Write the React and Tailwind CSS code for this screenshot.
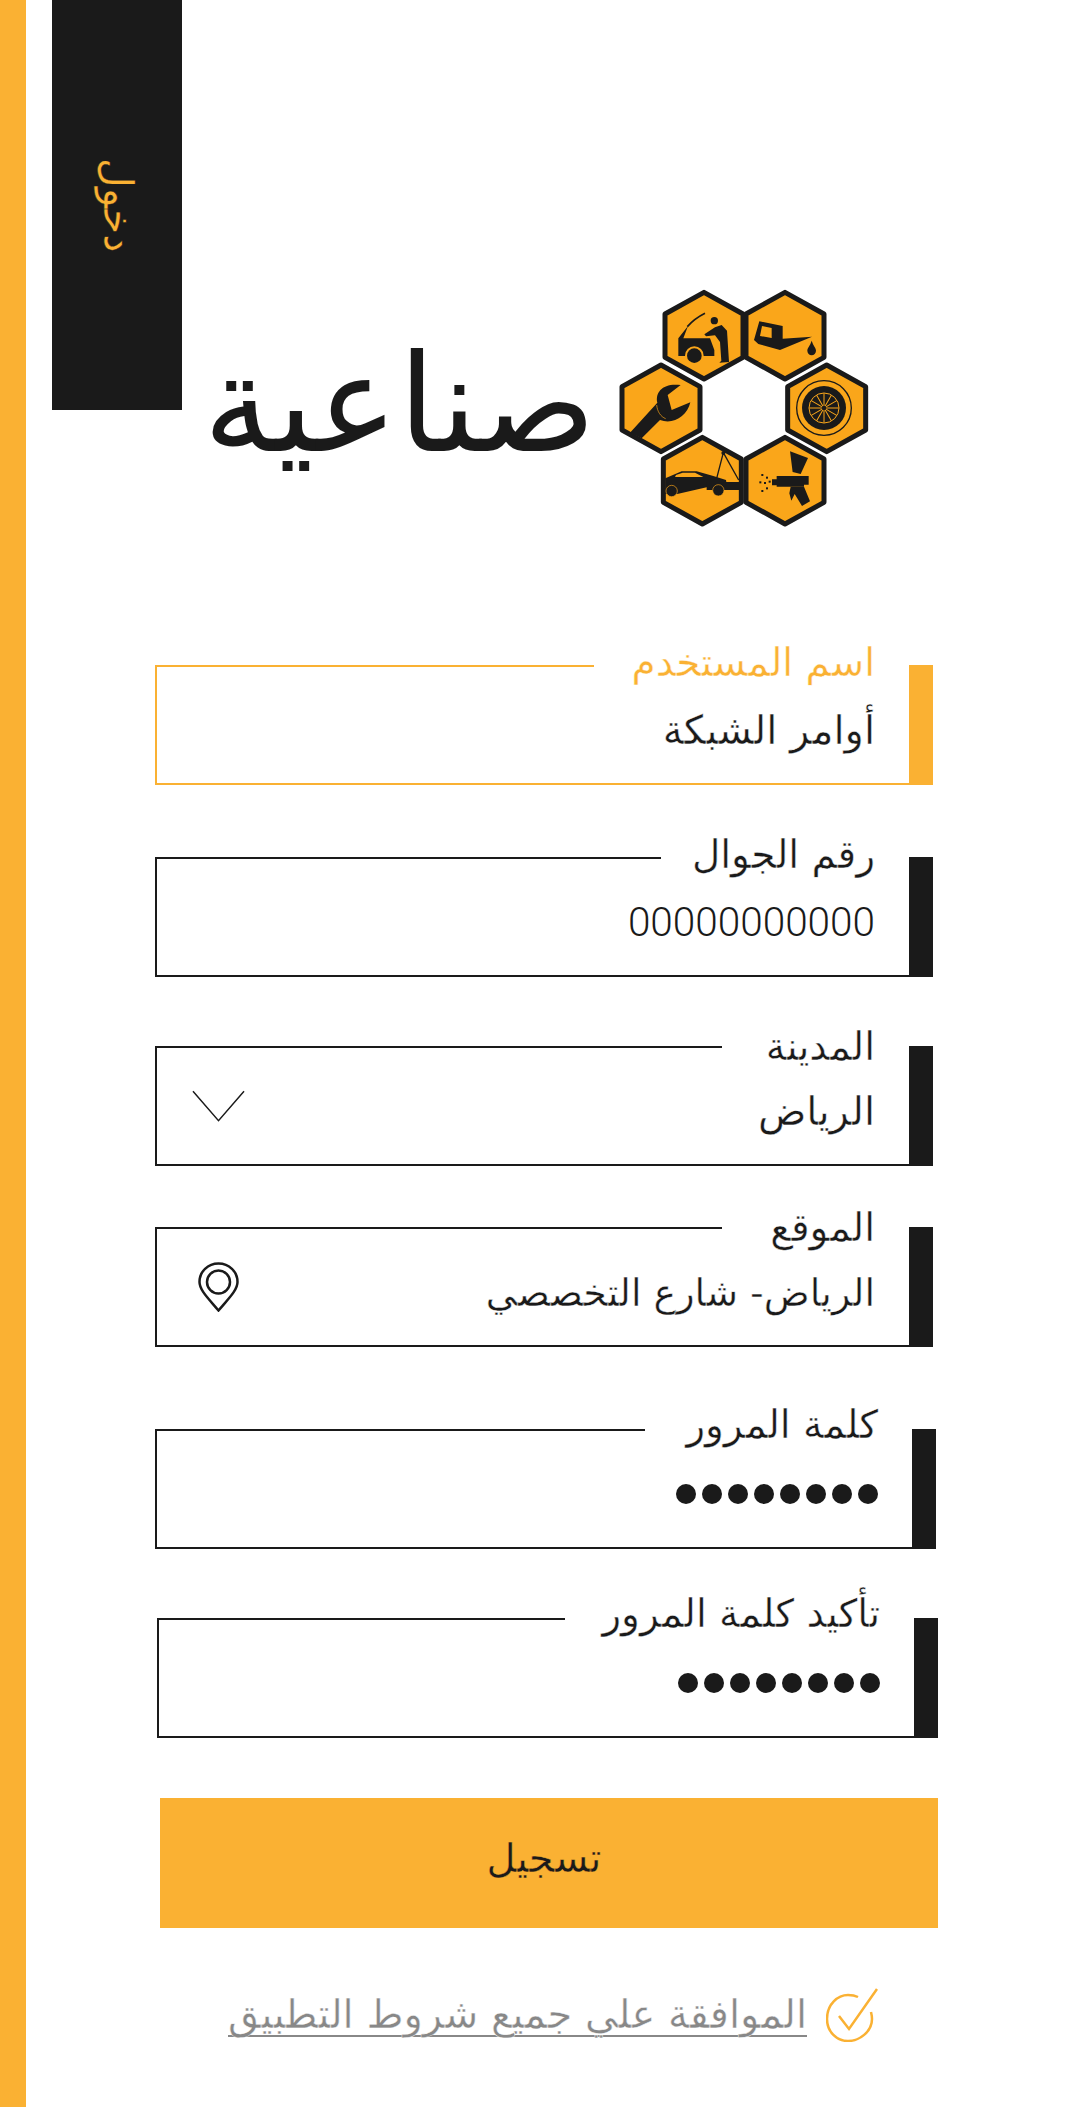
import React from 'react';

const font = "font-['DejaVu_Sans',sans-serif]";

// hexagon centres of the logo, in viewBox units
const hexes = [
  [312, 197],
  [555, 197],
  [183, 415],
  [680, 415],
  [307, 632],
  [555, 632],
];

const hexPoints = ([cx, cy]) =>
  [
    [cx, cy - 130],
    [cx + 117, cy - 65],
    [cx + 117, cy + 65],
    [cx, cy + 130],
    [cx - 117, cy + 65],
    [cx - 117, cy - 65],
  ]
    .map((p) => p.join(','))
    .join(' ');

const spokes = [0, 30, 60, 90, 120, 150];

const Logo = () => (
  <svg viewBox="0 0 900 810" className="w-[300px] h-[270px] shrink-0">
    {hexes.map((h) => (
      <polygon key={h.join()} points={hexPoints(h)} fill="#faa61a" stroke="#1a1a1a" strokeWidth="15" strokeLinejoin="round" />
    ))}
    {/* mechanic under a hood */}
    <path d="M235 258V205L264 168L250 205H330L343 240V258Z" fill="#1a1a1a" />
    <path d="M262 170C278 152 295 140 315 130" fill="none" stroke="#1a1a1a" strokeWidth="5" />
    <circle cx="283" cy="257" r="28" fill="#faa61a" />
    <circle cx="283" cy="257" r="22" fill="#1a1a1a" />
    <circle cx="343" cy="152" r="11" fill="#1a1a1a" />
    <path d="M313 193L345 172L365 165L381 182L387 276L358 278L364 272L360 216L345 196L318 199Z" fill="#1a1a1a" />
    {/* oil can */}
    <path d="M462 210L478 154L548 168L548 206L636 200L540 240L475 222Z" fill="#1a1a1a" />
    <path d="M486 168L515 174L515 204L480 198Z" fill="#faa61a" />
    <path d="M635 212C640 228 648 234 648 242C648 250 642 256 635 256C628 256 622 250 622 242C622 234 630 228 635 212Z" fill="#1a1a1a" />
    {/* wrench */}
    <path d="M90 488L172 398C165 365 190 338 242 345L203 375L215 420L271 397C262 440 218 465 180 450L125 505Z" fill="#1a1a1a" />
    <path d="M170 405C172 425 182 440 197 446" fill="none" stroke="#faa61a" strokeWidth="2" />
    {/* wheel */}
    <circle cx="672" cy="414" r="82" fill="none" stroke="#1a1a1a" strokeWidth="4" />
    <circle cx="672" cy="414" r="66" fill="#1a1a1a" />
    <circle cx="672" cy="414" r="45" fill="none" stroke="#faa61a" strokeWidth="3" />
    {spokes.map((a) => (
      <line key={a} x1="672" y1="370" x2="672" y2="458" stroke="#faa61a" strokeWidth="3" transform={`rotate(${a} 672 414)`} />
    ))}
    <circle cx="672" cy="414" r="7" fill="#1a1a1a" />
    {/* tow truck */}
    <path d="M196 672V625L245 604H290L340 618L378 630L380 642L320 652L232 672Z" fill="#1a1a1a" />
    <path d="M320 636H421V660H320Z" fill="#1a1a1a" />
    <path d="M228 615L248 608H285L310 621H225Z" fill="#faa61a" />
    <path d="M370 548L416 630M370 548L350 625" fill="none" stroke="#1a1a1a" strokeWidth="4" />
    <circle cx="370" cy="549" r="6" fill="#1a1a1a" />
    <circle cx="215" cy="663" r="17" fill="#1a1a1a" stroke="#faa61a" strokeWidth="2" />
    <circle cx="355" cy="661" r="17" fill="#1a1a1a" stroke="#faa61a" strokeWidth="2" />
    {/* spray gun */}
    <path d="M570 544L624 564L602 612L578 606Z" fill="#1a1a1a" />
    <path d="M516 628H530V618H626V644H612V650H530V646H516Z" fill="#1a1a1a" />
    <path d="M572 650H612L630 694L606 708L584 672L574 692L568 670Z" fill="#1a1a1a" />
    {[[484, 612], [498, 620], [478, 634], [492, 636], [506, 632], [498, 652], [484, 660]].map(([x, y]) => (
      <rect key={`${x}-${y}`} x={x} y={y} width="6" height="6" fill="#1a1a1a" />
    ))}
  </svg>
);

const Dots = () => (
  <div className="flex gap-[6px]">
    {[0, 1, 2, 3, 4, 5, 6, 7].map((i) => (
      <span key={i} className="w-[20px] h-[20px] rounded-full bg-[#1a1a1a]" />
    ))}
  </div>
);

const Chevron = () => (
  <svg viewBox="0 0 54 32" className="w-[53px] h-[32px]" fill="none" stroke="#1a1a1a" strokeWidth="1.5">
    <path d="M1 1L27 31L53 1" />
  </svg>
);

const Pin = () => (
  <svg viewBox="0 0 41 50" className="ml-[6px] w-[41px] h-[50px]" fill="none" stroke="#1a1a1a" strokeWidth="2.5">
    <path d="M20.500 48.500C10 36 1.500 28 1.500 20C1.500 9.500 10 1.500 20.500 1.500C31 1.500 39.500 9.500 39.500 20C39.500 28 31 36 20.500 48.500Z" />
    <circle cx="20.500" cy="20" r="11.500" />
  </svg>
);

const Field = ({ label, labelWidth, labelTop = 'top-[-4px]', active, className = '', icon, children }) => {
  const line = active ? 'border-[#fab133]' : 'border-[#1a1a1a]';
  const bar = active ? 'bg-[#fab133]' : 'bg-[#1a1a1a]';
  const labelColor = active ? 'text-[#fab133]' : 'text-[#1a1a1a]';

  return (
    <div className={`relative flex h-[120px] ${className}`}>
      <div className={`flex-1 flex items-center border-2 border-r-0 pl-[35px] pr-[34px] ${line}`}>
        {icon}
        <div className="ml-auto pt-[10px] text-[40px] leading-[48px] text-[#1a1a1a] [-webkit-text-stroke:0.4px_white]">{children}</div>
      </div>
      <div className={`w-[24px] ${bar}`} />
      <div className={`absolute right-[24px] top-[-24px] h-[48px] bg-white text-[39px] leading-[48px] ${labelColor} ${labelWidth} [-webkit-text-stroke:0.4px_white]`}>
        <span className={`absolute right-[34px] whitespace-nowrap ${labelTop}`} dir="rtl">{label}</span>
      </div>
    </div>
  );
};

const App = () => {
  return (
    <div className={`flex w-[1080px] h-[2107px] bg-white overflow-hidden ${font}`}>
      <div className="w-[26px] bg-[#fab133]" />
      <div className="flex-1">
        <div className="flex items-start h-[665px]">
          <div className="ml-[26px] flex h-[410px] w-[130px] shrink-0 items-center justify-center bg-[#1a1a1a]">
            <span dir="rtl" className="text-[41px] leading-none text-[#fab133] [writing-mode:vertical-rl] [-webkit-text-stroke:0.4px_#1a1a1a]">دخول</span>
          </div>
          <div className="mt-[334px] w-[418px] pl-[21px] text-[136px] leading-[140px] text-[#1a1a1a]">
            <span dir="rtl" className="block w-fit whitespace-nowrap">صناعية</span>
          </div>
          <div className="mt-[270px]">
            <Logo />
          </div>
        </div>

        <div className="flex flex-col">
          <Field active label="اسم المستخدم" labelWidth="w-[315px]" labelTop="top-[-2px]" className="ml-[129px] w-[778px]">
            <span dir="rtl">أوامر الشبكة</span>
          </Field>
          <Field label="رقم الجوال" labelWidth="w-[248px]" labelTop="top-[-2px]" className="ml-[129px] w-[778px] mt-[72px]">
            <span className="font-['Roboto',sans-serif] font-light text-[40.5px] [-webkit-text-stroke:0]">00000000000</span>
          </Field>
          <Field label="المدينة" labelWidth="w-[187px]" labelTop="top-[1px]" className="ml-[129px] w-[778px] mt-[69px]" icon={<Chevron />}>
            <span dir="rtl">الرياض</span>
          </Field>
          <Field label="الموقع" labelWidth="w-[187px]" labelTop="top-[1px]" className="ml-[129px] w-[778px] mt-[61px]" icon={<Pin />}>
            <span dir="rtl" className="text-[38px]">الرياض- شارع التخصصي</span>
          </Field>
          <Field label="كلمة المرور" labelWidth="w-[267px]" className="ml-[129px] w-[781px] mt-[82px]">
            <Dots />
          </Field>
          <Field label="تأكيد كلمة المرور" labelWidth="w-[349px]" className="ml-[131px] w-[781px] mt-[69px]">
            <Dots />
          </Field>

          <button className="ml-[134px] mt-[60px] h-[130px] w-[778px] bg-[#fab133] pr-[10px] pb-[10px] text-[40px] text-[#1a1a1a] [-webkit-text-stroke:0.4px_#fab133]">
            تسجيل
          </button>

          <div className="ml-[202px] mt-[60px] flex items-center gap-[19px]">
            <span dir="rtl" className="border-b-2 border-[#888888] text-[40px] leading-[42px] whitespace-nowrap text-[#888888] [-webkit-text-stroke:0.4px_white]">الموافقة علي جميع شروط التطبيق</span>
            <svg viewBox="0 0 52 54" className="w-[52px] h-[54px] shrink-0" fill="none" stroke="#fab133" strokeWidth="2.5">
              <path d="M32 9C28 7 25 7 22 7C12 7 1 16 1 31C1 44 11 53 22 53C33 53 46 44 46 31C46 28 45.500 26 45 24" />
              <path d="M13 28L23 41L51 1" />
            </svg>
          </div>
        </div>
      </div>
    </div>
  );
};

export default App;
